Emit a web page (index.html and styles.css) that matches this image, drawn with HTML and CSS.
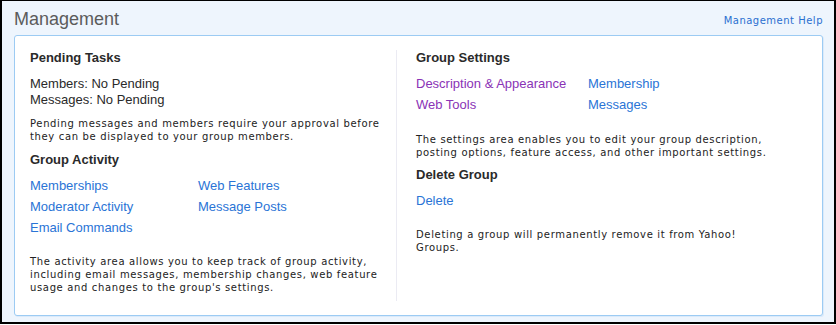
FILE: index.html
```html
<!DOCTYPE html>
<html>
<head>
<meta charset="utf-8">
<link rel="stylesheet" href="styles.css">
</head>
<body>
<div class="frame">
  <div class="header">
    <h1 class="title">Management</h1>
    <a class="help" href="#">Management Help</a>
  </div>
  <div class="panel">
    <div class="col col-left">
      <h2 class="heading">Pending Tasks</h2>
      <div class="stats">
        <div>Members: No Pending</div>
        <div>Messages: No Pending</div>
      </div>
      <p class="note">Pending messages and members require your approval before they can be displayed to your group members.</p>
      <h2 class="heading">Group Activity</h2>
      <div class="links links-left">
        <a href="#">Memberships</a>
        <a href="#">Web Features</a>
        <a href="#">Moderator Activity</a>
        <a href="#">Message Posts</a>
        <a href="#">Email Commands</a>
      </div>
      <p class="note note-activity">The activity area allows you to keep track of group activity, including email messages, membership changes, web feature usage and changes to the group's settings.</p>
    </div>
    <div class="divider"></div>
    <div class="col col-right">
      <h2 class="heading">Group Settings</h2>
      <div class="links links-right">
        <a class="visited" href="#">Description &amp; Appearance</a>
        <a href="#">Membership</a>
        <a class="visited" href="#">Web Tools</a>
        <a href="#">Messages</a>
      </div>
      <p class="note note-settings">The settings area enables you to edit your group description, posting options, feature access, and other important settings.</p>
      <h2 class="heading">Delete Group</h2>
      <div class="links links-single">
        <a href="#">Delete</a>
      </div>
      <p class="note note-delete">Deleting a group will permanently remove it from Yahoo! Groups.</p>
    </div>
  </div>
</div>
</body>
</html>
```
FILE: styles.css
```css
html, body {
  margin: 0;
  padding: 0;
  background: #ffffff;
}
.frame {
  box-sizing: border-box;
  width: 836px;
  height: 324px;
  border-top: 1px solid #000;
  border-left: 2px solid #000;
  border-right: 2px solid #000;
  border-bottom: 2px solid #000;
  background: #eef5fd;
  font-family: "Liberation Sans", Arial, sans-serif;
}
.header {
  height: 34px;
  display: flex;
  align-items: flex-start;
  justify-content: space-between;
  padding: 0 11px 0 12px;
}
.title {
  margin: 8px 0 0 0;
  font-size: 18px;
  font-weight: normal;
  color: #5b5b5b;
  line-height: 21px;
}
.help {
  margin-top: 13px;
  font-family: "DejaVu Sans", Verdana, sans-serif;
  font-size: 10px;
  letter-spacing: 0.5px;
  color: #2a6fd0;
  text-decoration: none;
  line-height: 13px;
}
.panel {
  box-sizing: border-box;
  margin: 0 11px 0 12px;
  height: 281px;
  background: #fff;
  border: 1px solid #9ccbf3;
  border-radius: 3px;
  box-shadow: 1px 1px 0 #dbeafa;
  display: flex;
  padding: 14px 0 0 15px;
}
.col-left {
  width: 364px;
  padding-right: 2px;
}
.divider {
  width: 1px;
  background: #ebebf3;
  margin-bottom: 14px;
}
.col-right {
  padding-left: 19px;
  width: 356px;
}
.heading {
  margin: 0;
  font-size: 13px;
  font-weight: bold;
  color: #2a2a2a;
  line-height: 16px;
}
.stats {
  margin-top: 10px;
  font-size: 13px;
  line-height: 16px;
  color: #2a2a2a;
}
.note {
  margin: 0;
  font-family: "DejaVu Sans", Verdana, sans-serif;
  font-size: 10px;
  letter-spacing: 0.65px;
  line-height: 13px;
  color: #222;
}
.col-left .note {
  margin-top: 9px;
  margin-bottom: 9px;
}
.links {
  display: grid;
  grid-template-columns: 168px auto;
  row-gap: 5px;
  margin-top: 10px;
  font-size: 13px;
  line-height: 16px;
}
.links-right {
  grid-template-columns: 172px auto;
}
.links-single {
  margin-top: 10px;
}
.links a {
  color: #2a74d6;
  text-decoration: none;
  justify-self: start;
}
.links a.visited {
  color: #8a33b6;
}
.col-left .note-activity {
  margin-top: 19px;
}
.col-right .note-settings {
  margin-top: 20px;
  margin-bottom: 8px;
}
.col-right .note-delete {
  margin-top: 19px;
}
```
